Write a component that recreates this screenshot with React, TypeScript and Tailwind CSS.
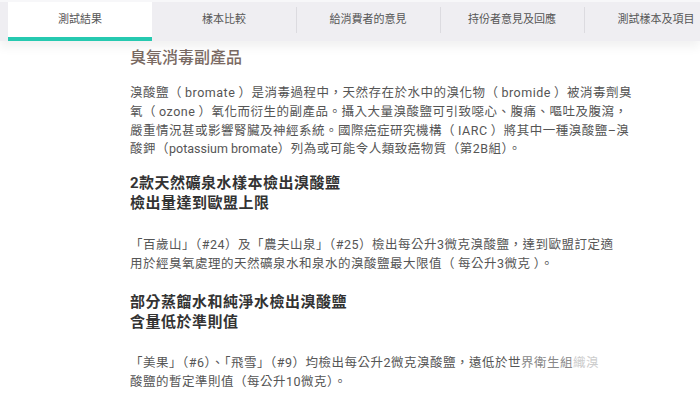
const tabs = ["測試結果", "樣本比較", "給消費者的意見", "持份者意見及回應", "測試樣本及項目"];

const font = { fontFamily: "Roboto, 'Noto Sans CJK TC', sans-serif" };

export default function App() {
  return (
    <div className="w-[700px] h-[394px] overflow-hidden bg-white" style={font}>
      {/* tab bar */}
      <div className="relative z-10 flex h-[41px] border-t-2 border-[#f7f7f9] bg-[#efeef2] pl-[8px] shadow-[0_6px_10px_rgba(0,0,0,0.06)]">
        {tabs.map((t, i) => (
          <div
            key={t}
            className={
              i === 0
                ? "flex w-[144px] shrink-0 items-center justify-center border-b-4 border-[#26c9b0] bg-white pt-[1px] text-[11px] text-[#555]"
                : "flex w-[144px] shrink-0 items-center justify-center pt-[1px] pb-[4px] text-[11px] text-[#555]"
            }
          >
            {i > 1 && <div className="mr-auto h-[26px] w-px bg-[#dcdbe0]" />}
            <span className={i > 1 ? "mr-auto -ml-px" : ""}>{t}</span>
          </div>
        ))}
      </div>

      <div className="pl-[130px] pt-[5px] tracking-[0.5px]">
        <h1 className="text-[16px] font-medium leading-[24px] tracking-normal text-[#7a6a63]">臭氧消毒副產品</h1>

        <p className="mt-[14px] whitespace-nowrap text-[12.5px] leading-[18.8px] text-[#555]">
          溴酸鹽（{"\u2009"}bromate{"\u2009"}）是消毒過程中，天然存在於水中的溴化物（{"\u2009"}bromide{"\u2009"}）被消毒劑臭
          <br />
          氧（{"\u2009"}ozone{"\u2009"}）氧化而衍生的副產品。攝入大量溴酸鹽可引致噁心、腹痛、嘔吐及腹瀉，
          <br />
          嚴重情況甚或影響腎臟及神經系統。國際癌症研究機構（{"\u2009"}IARC{"\u2009"}）將其中一種溴酸鹽–溴
          <br />
          酸鉀（<span className="tracking-normal">potassium bromate</span>）列為或可能令人類致癌物質（第2B組）。
        </p>

        <h2 className="mt-[15px] text-[15px] font-bold leading-[19.5px] text-[#333]">
          2款天然礦泉水樣本檢出溴酸鹽
          <br />
          檢出量達到歐盟上限
        </h2>

        <p className="mt-[23px] whitespace-nowrap text-[12.5px] leading-[18.5px] text-[#555]">
          「百歲山」（#24）及「農夫山泉」（#25）檢出每公升3微克溴酸鹽，達到歐盟訂定適
          <br />
          用於經臭氧處理的天然礦泉水和泉水的溴酸鹽最大限值（{"\u2009"}每公升3微克{"\u2009"}）。
        </p>

        <h2 className="mt-[20px] text-[15px] font-bold leading-[19.5px] text-[#333]">
          部分蒸餾水和純淨水檢出溴酸鹽
          <br />
          含量低於準則值
        </h2>

        <p className="mt-[22px] whitespace-nowrap text-[12.5px] leading-[18.5px] text-[#555]">
          「美果」（#6）、「飛雪」（#9）均檢出每公升2微克溴酸鹽，遠低於世
          <span className="text-[#888]">界衛生組</span>
          <span className="text-[#ccc]">織溴</span>
          <br />
          酸鹽的暫定準則值（每公升10微克）。
        </p>
      </div>
    </div>
  );
}
